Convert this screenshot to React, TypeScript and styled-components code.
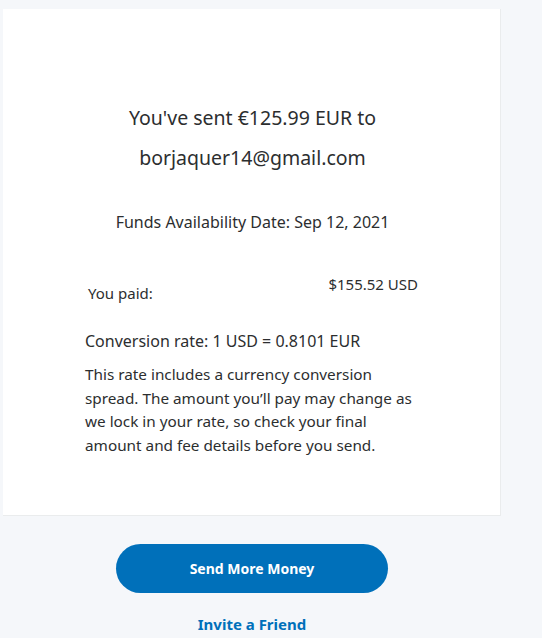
import styled, { createGlobalStyle } from "styled-components";

const GlobalStyle = createGlobalStyle`
  html, body {
    margin: 0;
    padding: 0;
    background: #f5f7fa;
  }
  body {
    font-family: "Noto Sans", "Open Sans", Arial, sans-serif;
    color: #2c2e2f;
  }
`;

const Page = styled.div`
  padding: 9px 0 0 3px;
  width: 498px;
`;

const Card = styled.div`
  background: #fff;
  border: 1px solid #eaeced;
  border-top: none;
  border-left: none;
  padding: 89px 80px 58px 82px;
`;

const Heading = styled.h1`
  margin: 0;
  font-size: 19.5px;
  font-weight: 400;
  line-height: 40px;
  text-align: center;
`;

const FundsDate = styled.p`
  margin: 32px 0 0 0;
  font-size: 16px;
  line-height: 24px;
  text-align: center;
`;

const PaidRow = styled.div`
  display: flex;
  justify-content: space-between;
  align-items: flex-start;
  margin-top: 38px;
`;

const PaidLabel = styled.span`
  font-size: 15px;
  line-height: 24px;
  margin: 9px 0 0 3px;
`;

const PaidAmount = styled.span`
  font-size: 15px;
  line-height: 24px;
  margin-right: 2px;
`;

const Rate = styled.p`
  margin: 24px 0 0 0;
  font-size: 16px;
  line-height: 24px;
`;

const Disclaimer = styled.p`
  margin: 10px 0 0 0;
  font-size: 15.3px;
  line-height: 23.5px;
  max-width: 330px;
`;

const Actions = styled.div`
  display: flex;
  flex-direction: column;
  align-items: center;
  padding-top: 28px;
`;

const PrimaryButton = styled.button`
  width: 272px;
  height: 49px;
  border: none;
  border-radius: 25px;
  background: #0070ba;
  color: #fff;
  font-family: inherit;
  font-size: 14px;
  font-weight: 700;
  cursor: pointer;
`;

const LinkButton = styled.a`
  margin-top: 20px;
  color: #0070ba;
  font-size: 15px;
  font-weight: 700;
  text-decoration: none;
  line-height: 22px;
`;

const App = () => (
  <>
    <GlobalStyle />
    <Page>
      <Card>
        <Heading>
          You've sent €125.99 EUR to
          <br />
          borjaquer14@gmail.com
        </Heading>
        <FundsDate>Funds Availability Date: Sep 12, 2021</FundsDate>
        <PaidRow>
          <PaidLabel>You paid:</PaidLabel>
          <PaidAmount>$155.52 USD</PaidAmount>
        </PaidRow>
        <Rate>Conversion rate: 1 USD = 0.8101 EUR</Rate>
        <Disclaimer>
          This rate includes a currency conversion spread. The amount you’ll pay
          may change as we lock in your rate, so check your final amount and fee
          details before you send.
        </Disclaimer>
      </Card>
      <Actions>
        <PrimaryButton>Send More Money</PrimaryButton>
        <LinkButton href="#">Invite a Friend</LinkButton>
      </Actions>
    </Page>
  </>
);

export default App;
